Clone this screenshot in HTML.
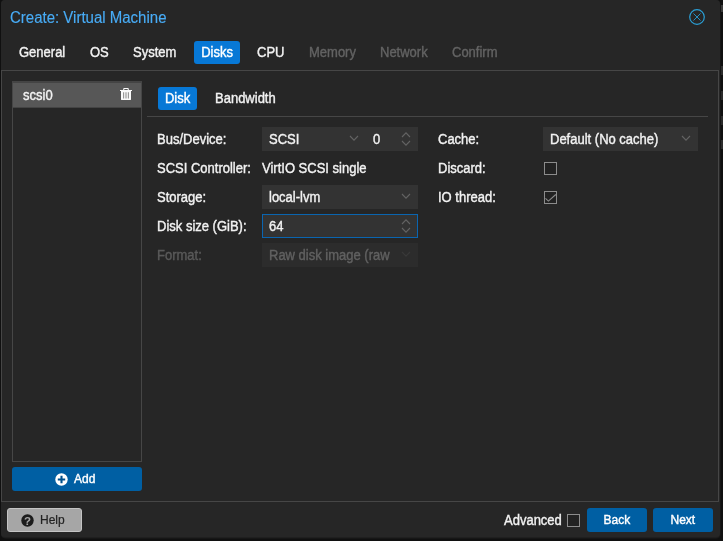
<!DOCTYPE html>
<html><head><meta charset="utf-8">
<style>
*{box-sizing:border-box;margin:0;padding:0}
html,body{width:723px;height:541px;overflow:hidden;background:#101010;font-family:"Liberation Sans",Arial,sans-serif;font-size:14px;color:#f2f2f2}
.abs{position:absolute}
#win{will-change:transform;position:absolute;left:0;top:0;width:720px;height:537px;background:#262626;clip-path:inset(0 0 0 1px round 4px)}
#shadow{position:absolute;left:1px;top:0;width:720px;height:539px;background:#161616;border-radius:5px}
#shadow2{position:absolute;left:1px;top:0;width:719px;height:538px;background:#1f1f1f;border-radius:4px}
.t{display:inline-block;white-space:nowrap;transform:scaleX(.9286);transform-origin:0 50%;-webkit-text-stroke:.4px currentColor}
.c .t{transform-origin:50% 50%}
#title{position:absolute;left:10px;top:7.5px;font-size:16px;line-height:20px;color:#48acf6}
#title .t{transform:scaleX(.9375);-webkit-text-stroke:.15px currentColor}
.tab{position:absolute;top:41px;height:23px;line-height:23px;font-size:14px;color:#f2f2f2;white-space:nowrap}
.tab.act{background:#0778d6;color:#fff;border-radius:3px;text-align:center}
.tab.dis{color:#636363}
#body{position:absolute;left:1px;top:70px;width:718px;height:432px;border:1px solid #464646;background:#262626}
#list{position:absolute;left:12px;top:81px;width:130px;height:381px;border:1px solid #464646;border-top:2px solid #444}
#item{position:absolute;left:0;top:0;width:128px;height:25px;background:#575757;line-height:25px;padding-left:10px;font-size:14px;border-bottom:1px solid #444}
.btn{position:absolute;height:24px;line-height:24px;border-radius:3px;background:#005fa3;color:#fff;font-size:12.5px;text-align:center}
.btn .t{transform:scaleX(.96);transform-origin:50% 50%}
.lbl{position:absolute;font-size:14px;line-height:24px;color:#f2f2f2;white-space:nowrap}
.fld{position:absolute;height:24px;background:#333;font-size:14px;line-height:24px;padding-left:7px;color:#f2f2f2;white-space:nowrap;overflow:hidden}
.cb{position:absolute;width:13px;height:13px;border:1px solid #8c8c8c;background:#222}
.chev{position:absolute;fill:none;stroke:#646464;stroke-width:1.1}
</style></head><body>
<div class="abs" style="left:721px;top:5px;width:2px;height:7px;background:#3a3a3a"></div><div class="abs" style="left:721px;top:66px;width:2px;height:9px;background:#2c2c2c"></div><div class="abs" style="left:721px;top:91px;width:2px;height:9px;background:#2a2a2a"></div><div class="abs" style="left:721px;top:116px;width:2px;height:9px;background:#2a2a2a"></div><div class="abs" style="left:721px;top:140px;width:2px;height:9px;background:#2c2c2c"></div>
<div id="shadow"></div><div id="shadow2"></div>
<div id="win">
<div id="title"><span class="t">Create: Virtual Machine</span></div>
<svg class="abs" style="left:688px;top:8px" width="18" height="18" viewBox="0 0 18 18"><circle cx="9" cy="9" r="7.3" fill="none" stroke="#2a9fd6" stroke-width="1.2"/><path d="M5.5 5.5 L12.5 12.5 M12.5 5.5 L5.5 12.5" stroke="#2596cb" stroke-width="0.95"/></svg>

<div class="tab" style="left:19px"><span class="t">General</span></div>
<div class="tab" style="left:90px"><span class="t">OS</span></div>
<div class="tab" style="left:133px"><span class="t">System</span></div>
<div class="tab act c" style="left:194px;width:46px"><span class="t">Disks</span></div>
<div class="tab" style="left:257px"><span class="t">CPU</span></div>
<div class="tab dis" style="left:309px"><span class="t">Memory</span></div>
<div class="tab dis" style="left:380px"><span class="t">Network</span></div>
<div class="tab dis" style="left:452px"><span class="t">Confirm</span></div>

<div id="body"></div>
<div id="list"><div id="item"><span class="t">scsi0</span></div>
<svg class="abs" style="left:107px;top:5px" width="12" height="13" viewBox="0 0 12 13"><path d="M0 2h12v1.1h-12z M3.2 2.2v-1.2q0-1 1-1h3.6q1 0 1 1v1.2h-1.1v-1.1h-3.4v1.1z" fill="#fafafa"/><path d="M1 3.1h10v8.1q0 .9-.9.9h-8.2q-.9 0-.9-.9z M3.4 4.3v6.2h.7v-6.2z M5.65 4.3v6.2h.7v-6.2z M7.9 4.3v6.2h.7v-6.2z" fill="#fafafa" fill-rule="evenodd"/></svg>
</div>
<div class="btn" style="left:12px;top:467px;width:130px">
<svg class="abs" style="left:43px;top:5.5px" width="13" height="13" viewBox="0 0 13 13"><circle cx="6.5" cy="6.5" r="6.2" fill="#fff"/><path d="M6.5 2.8v7.4M2.8 6.5h7.4" stroke="#00508c" stroke-width="2.1"/></svg>
<span class="abs" style="left:62px;top:0"><span class="t" style="transform-origin:0 50%">Add</span></span></div>

<div class="tab act c" style="left:158px;top:87px;width:39px"><span class="t">Disk</span></div>
<div class="tab" style="left:215px;top:87px"><span class="t">Bandwidth</span></div>
<div class="abs" style="left:147px;top:116px;width:561px;height:1px;background:#464646"></div>

<div class="lbl" style="left:157px;top:127px"><span class="t">Bus/Device:</span></div>
<div class="lbl" style="left:157px;top:156px"><span class="t">SCSI Controller:</span></div>
<div class="lbl" style="left:157px;top:185px"><span class="t">Storage:</span></div>
<div class="lbl" style="left:157px;top:214px"><span class="t">Disk size (GiB):</span></div>
<div class="lbl" style="left:157px;top:243px;color:#5a5a5a"><span class="t">Format:</span></div>

<div class="fld" style="left:262px;top:127px;width:156px"><span class="t">SCSI</span></div>
<div class="lbl" style="left:373px;top:127px"><span class="t">0</span></div>
<svg class="chev" style="left:349px;top:135px" width="10" height="7" viewBox="0 0 10 7"><path d="M1 1l4 4.2l4-4.2"/></svg>
<svg class="chev" style="left:401px;top:131px" width="10" height="16" viewBox="0 0 10 16"><path d="M1 6l4-4.2l4 4.2M1 10l4 4.2l4-4.2"/></svg>
<div class="lbl" style="left:262px;top:156px"><span class="t">VirtIO SCSI single</span></div>
<div class="fld" style="left:262px;top:185px;width:156px"><span class="t">local-lvm</span></div>
<svg class="chev" style="left:401px;top:193px" width="10" height="7" viewBox="0 0 10 7"><path d="M1 1l4 4.2l4-4.2"/></svg>
<div class="fld" style="left:262px;top:214px;width:156px;border:1px solid #0a65b0;line-height:22px;padding-left:6px"><span class="t">64</span></div>
<svg class="chev" style="left:401px;top:218px" width="10" height="16" viewBox="0 0 10 16"><path d="M1 6l4-4.2l4 4.2M1 10l4 4.2l4-4.2"/></svg>
<div class="fld" style="left:262px;top:243px;width:156px;color:#616161;background:#2c2c2c"><span class="t">Raw disk image (raw</span></div>
<svg class="chev" style="left:401px;top:251px;stroke:#393939" width="10" height="7" viewBox="0 0 10 7"><path d="M1 1l4 4.2l4-4.2"/></svg>

<div class="lbl" style="left:438px;top:127px"><span class="t">Cache:</span></div>
<div class="lbl" style="left:438px;top:156px"><span class="t">Discard:</span></div>
<div class="lbl" style="left:438px;top:185px"><span class="t">IO thread:</span></div>
<div class="fld" style="left:543px;top:127px;width:155px"><span class="t">Default (No cache)</span></div>
<svg class="chev" style="left:681px;top:135px" width="10" height="7" viewBox="0 0 10 7"><path d="M1 1l4 4.2l4-4.2"/></svg>
<div class="cb" style="left:544px;top:162px"></div>
<div class="cb" style="left:544px;top:191px"></div>
<svg class="abs" style="left:544px;top:191px" width="13" height="13" viewBox="0 0 13 13"><path d="M1.5 7.3l2.9 2.8l7.4-6.6" fill="none" stroke="#8c8c8c" stroke-width="1.1"/></svg>

<div class="btn" style="left:7px;top:508px;width:75px;background:#a6a6a6;color:#222;border:1px solid #c4c4c4;line-height:22px">
<svg class="abs" style="left:13px;top:4.5px" width="13" height="13" viewBox="0 0 13 13"><circle cx="6.5" cy="6.5" r="6.2" fill="#1c1c1c"/><text x="6.5" y="10.6" font-size="11.5" font-weight="bold" text-anchor="middle" fill="#a6a6a6" font-family="Liberation Sans, sans-serif">?</text></svg>
<span class="abs" style="left:32px;top:0"><span class="t" style="transform-origin:0 50%;-webkit-text-stroke:.2px currentColor">Help</span></span></div>
<div class="lbl" style="left:504px;top:508px"><span class="t">Advanced</span></div>
<div class="cb" style="left:567px;top:514px"></div>
<div class="btn" style="left:587px;top:508px;width:60px"><span class="t">Back</span></div>
<div class="btn" style="left:653px;top:508px;width:60px"><span class="t">Next</span></div>
</div>
</body></html>
